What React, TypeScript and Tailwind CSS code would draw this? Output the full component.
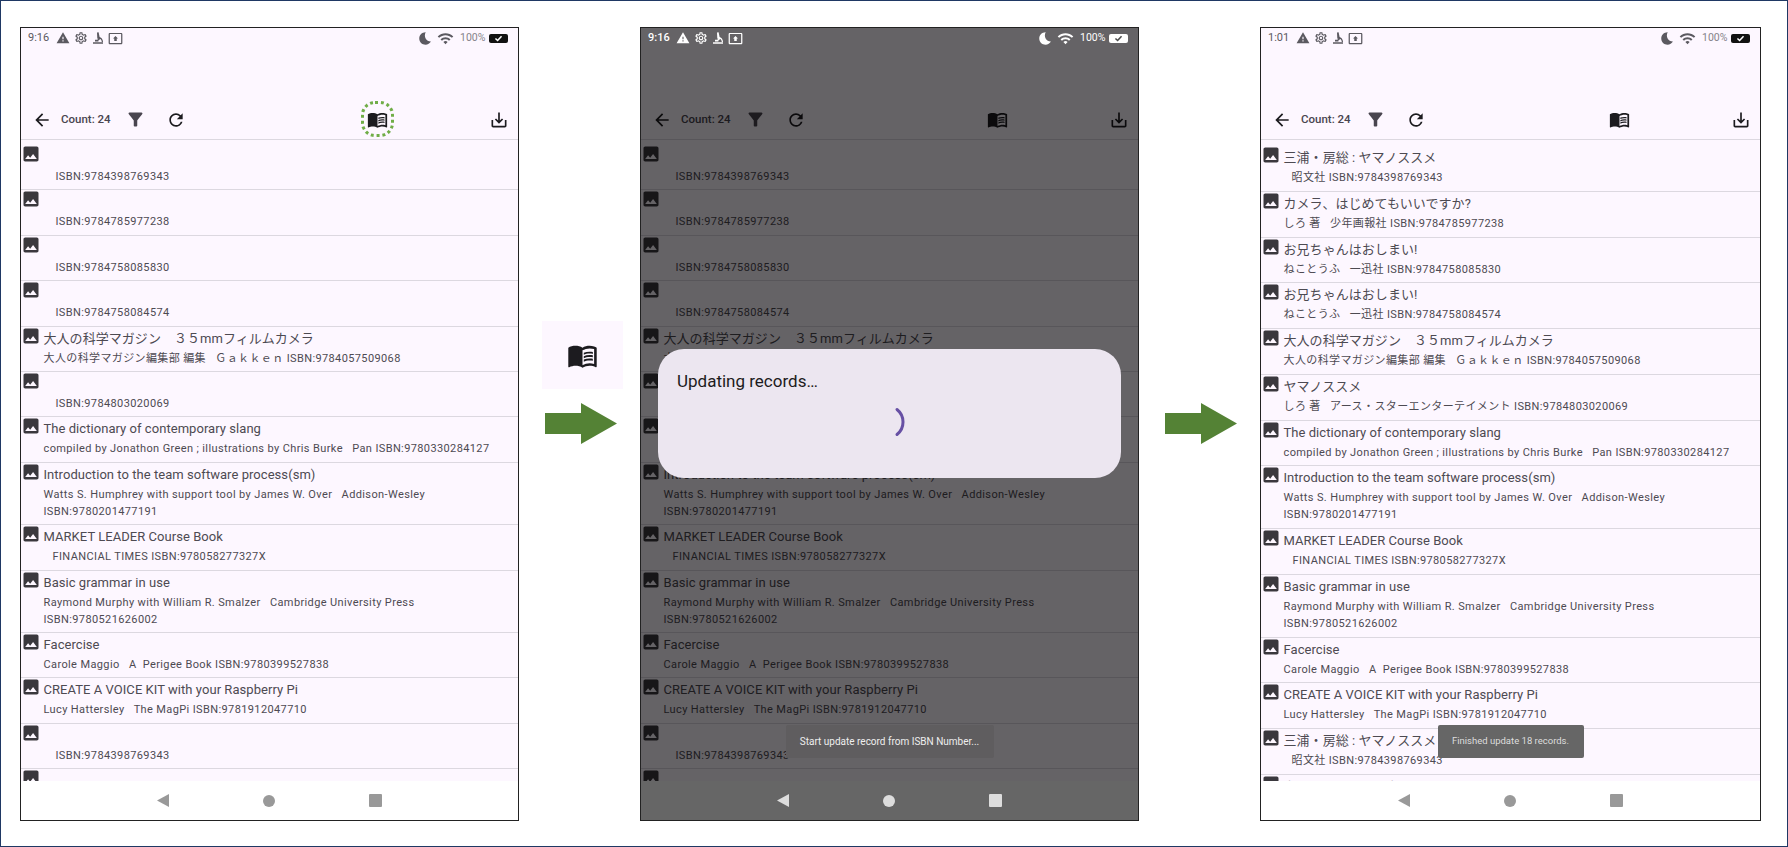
import { MdArrowBack, MdBedtime, MdFilterAlt, MdImage, MdMenuBook, MdOutlinePresentToAll, MdOutlineSettings, MdRefresh, MdSaveAlt, MdWarning, MdWifi } from 'react-icons/md'

type Book = {
  title?: string
  lines: string[]
  indent?: string
}

const isbnOnly = (isbn: string): Book => ({ lines: [`ISBN:${isbn}`], indent: 'pl-[12px]' })

// rows shared by both states
const commonRows: Book[] = [
  { title: '大人の科学マガジン　３５mmフィルムカメラ', lines: ['大人の科学マガジン編集部 編集   Ｇａｋｋｅｎ ISBN:9784057509068'] },
]

const restRows: Book[] = [
  { title: 'The dictionary of contemporary slang', lines: ['compiled by Jonathon Green ; illustrations by Chris Burke   Pan ISBN:9780330284127'] },
  { title: 'Introduction to the team software process(sm)', lines: ['Watts S. Humphrey with support tool by James W. Over   Addison-Wesley', 'ISBN:9780201477191'] },
  { title: 'MARKET LEADER Course Book', lines: ['FINANCIAL TIMES ISBN:978058277327X'], indent: 'pl-[9px]' },
  { title: 'Basic grammar in use', lines: ['Raymond Murphy with William R. Smalzer   Cambridge University Press', 'ISBN:9780521626002'] },
  { title: 'Facercise', lines: ['Carole Maggio   A  Perigee Book ISBN:9780399527838'] },
  { title: 'CREATE A VOICE KIT with your Raspberry Pi', lines: ['Lucy Hattersley   The MagPi ISBN:9781912047710'] },
]

const emptyRows: Book[] = [
  isbnOnly('9784398769343'),
  isbnOnly('9784785977238'),
  isbnOnly('9784758085830'),
  isbnOnly('9784758084574'),
  ...commonRows,
  isbnOnly('9784803020069'),
  ...restRows,
  isbnOnly('9784398769343'),
  { lines: [] },
]

const filledRows: Book[] = [
  { title: '三浦・房総 : ヤマノススメ', lines: ['昭文社 ISBN:9784398769343'], indent: 'pl-[8px]' },
  { title: 'カメラ、はじめてもいいですか?', lines: ['しろ 著   少年画報社 ISBN:9784785977238'] },
  { title: 'お兄ちゃんはおしまい!', lines: ['ねことうふ   一迅社 ISBN:9784758085830'] },
  { title: 'お兄ちゃんはおしまい!', lines: ['ねことうふ   一迅社 ISBN:9784758084574'] },
  ...commonRows,
  { title: 'ヤマノススメ', lines: ['しろ 著   アース・スターエンターテイメント ISBN:9784803020069'] },
  ...restRows,
  { title: '三浦・房総 : ヤマノススメ', lines: ['昭文社 ISBN:9784398769343'], indent: 'pl-[8px]' },
  { title: 'カメラ、はじめてもいいですか?', lines: [] },
]

function BookRow({ book, spacing }: { book: Book; spacing: string }) {
  return (
    <div className={`flex border-b border-[#dcd8e0] pl-[3px] ${spacing}`}>
      <MdImage size={20} className="-ml-[3.5px] -mt-[1px] shrink-0 self-start text-[#3a383d]" />
      <div className="ml-[3px] min-w-0">
        <p className="mt-[2px] h-[20px] text-[13px] leading-[20px] tracking-[0.05px] text-[#4d4a52] whitespace-pre">{book.title}</p>
        <div className={`mt-[2px] min-h-[16px] space-y-[1px] text-[11px] leading-[16px] tracking-[0.38px] text-[#4d4a52] whitespace-pre ${book.indent ?? ''}`}>
          {book.lines.map((line) => (
            <p key={line}>{line}</p>
          ))}
        </div>
      </div>
    </div>
  )
}

function MicroscopeIcon({ className }: { className: string }) {
  return (
    <svg viewBox="0 0 12 12" width="12" height="12" className={className} fill="currentColor">
      <path d="M5 0.5 6.6 0.2 7.6 5 9 5.8C10.3 6.8 11 8.5 11 10H9.8C9.7 8.8 9.2 7.7 8.3 7L6.4 8.4 5.4 7.8 6.3 6.6 5.3 6.8z" />
      <path d="M1 10.3h10V11.8H1zM3 7.8h3.4v1.6H3z" />
    </svg>
  )
}

function StatusBar({ time, dim }: { time: string; dim?: boolean }) {
  const tone = dim ? 'text-white' : 'text-[#5b5960]'
  return (
    <div className={`relative z-20 flex h-[20px] items-center pl-[7px] pr-[10px] text-[11px] ${tone}`}>
      <span className={`w-[27px] ${dim ? 'font-medium' : ''}`}>{time}</span>
      <MdWarning size={14} className="ml-[0.5px]" />
      <MdOutlineSettings size={14} className="ml-[4px]" />
      <MicroscopeIcon className="ml-[4px]" />
      <MdOutlinePresentToAll size={15} className="ml-[4px]" />
      <MdBedtime size={15} className="ml-auto" />
      <MdWifi size={17} className="ml-[4px]" />
      <span className={`ml-[6px] w-[27px] text-[10.5px] ${dim ? '' : 'text-[#85838a]'}`}>100%</span>
      <span className={`ml-[2px] flex h-[9px] w-[19px] items-center justify-center rounded-[2px] ${dim ? 'bg-white text-[#4a4a4a]' : 'bg-[#111] text-white'}`}>
        <svg viewBox="0 0 10 8" width="9" height="7" fill="none" stroke="currentColor" strokeWidth="1.8">
          <path d="M1.5 4 4 6.3 8.5 1.5" />
        </svg>
      </span>
    </div>
  )
}

function Toolbar({ ring }: { ring?: boolean }) {
  return (
    <div className="flex h-[40px] items-center border-b border-[#dcd8e0] pl-[11px] pr-[9.5px] text-[#1c1b1f]">
      <MdArrowBack size={20} className="shrink-0" />
      <span className="ml-[9px] w-[51px] text-[11.5px] font-medium whitespace-nowrap text-[#49454f]">Count: 24</span>
      <MdFilterAlt size={21} className="ml-[13px] text-[#49454f]" />
      <MdRefresh size={20} className="ml-[20px]" />
      <div className="relative ml-auto mr-[101px]">
        <MdMenuBook size={21} />
        {ring && <span className="absolute -left-[6px] -top-[8px] h-[36px] w-[33px] rounded-[14px] border-[3px] border-dotted border-[#70ad47]" />}
      </div>
      <MdSaveAlt size={20} />
    </div>
  )
}

function NavBar({ dim }: { dim?: boolean }) {
  const tone = dim ? 'bg-[#ddd]' : 'bg-[#999]'
  return (
    <div className="flex h-[39px] shrink-0 items-center justify-center gap-[94px] bg-white">
      <svg viewBox="0 0 12 13" width="12" height="13" className={`relative z-20 ${dim ? 'text-[#ddd]' : 'text-[#999]'}`} fill="currentColor">
        <path d="M12 0v13L0 6.5z" />
      </svg>
      <span className={`relative z-20 h-[12px] w-[12px] rounded-full ${tone}`} />
      <span className={`relative z-20 h-[13px] w-[13px] rounded-[1px] ${tone}`} />
    </div>
  )
}

function Toast({ text, className }: { text: string; className: string }) {
  return (
    <div className={`absolute bottom-[62px] left-1/2 z-30 flex h-[33px] -translate-x-1/2 items-center justify-center rounded-[2px] whitespace-nowrap ${className}`}>
      {text}
    </div>
  )
}

function Phone({ time, rows, width, listTop, spacing, ring, dim, children }: { time: string; rows: Book[]; width: string; listTop: string; spacing: string; ring?: boolean; dim?: boolean; children?: React.ReactNode }) {
  return (
    <div className={`relative flex h-[794px] shrink-0 flex-col overflow-hidden border border-[#222] bg-[#fdf7ff] ${width}`}>
      <StatusBar time={time} dim={dim} />
      <div className="h-[52px] shrink-0" />
      <Toolbar ring={ring} />
      <div className={`min-h-0 flex-1 overflow-hidden ${listTop}`}>
        {rows.map((book, i) => (
          <BookRow key={i} book={book} spacing={spacing} />
        ))}
      </div>
      <NavBar dim={dim} />
      {dim && <div className="absolute inset-0 z-10 bg-black/60" />}
      {children}
    </div>
  )
}

function Arrow() {
  return (
    <svg viewBox="0 0 72 41" width="72" height="41" className="ml-[2px] mt-[14px] text-[#548235]" fill="currentColor">
      <path d="M0 10H36V0L72 20.5 36 41V31H0z" />
    </svg>
  )
}

export default function App() {
  return (
    <div className="h-[847px] w-[1788px] overflow-hidden border border-[#1f3864] bg-white font-['Roboto','Noto_Sans_CJK_JP',sans-serif]">
      <div className="flex items-start pl-[19px] pt-[26px]">
        <Phone time="9:16" rows={emptyRows} width="w-[499px]" listTop="pt-[5px]" spacing="pb-[4.4px]" ring />

        <div className="flex w-[121px] shrink-0 flex-col items-center pt-[294px]">
          <div className="ml-[6px] flex h-[68px] w-[81px] items-center justify-center bg-[#fdf7ff] text-[#1c1b1f]">
            <MdMenuBook size={31} />
          </div>
          <Arrow />
        </div>

        <Phone time="9:16" rows={emptyRows} width="w-[499px]" listTop="pt-[5px]" spacing="pb-[4.4px]" dim>
          <div className="absolute left-[17px] right-[17px] top-[321px] z-30 h-[129px] rounded-[26px] bg-[#ece6f0] pl-[19px] pt-[20px]">
            <p className="text-[17px] leading-[24px] text-[#1d1b20]">Updating records…</p>
            <svg viewBox="0 0 40 40" width="40" height="40" className="mx-auto mt-[9px] -translate-x-[10px] text-[#6750a4]" fill="none" stroke="currentColor" strokeWidth="3" strokeLinecap="round">
              <path d="M28 7.5A16 16 0 0 1 28 32.5" />
            </svg>
          </div>
          <Toast text="Start update record from ISBN Number..." className="w-[208px] bg-[#5f5d5f] text-[10px] text-[#eee]" />
        </Phone>

        <div className="flex w-[121px] shrink-0 flex-col items-center pt-[294px]">
          <div className="h-[68px]" />
          <Arrow />
        </div>

        <Phone time="1:01" rows={filledRows} width="w-[501px]" listTop="pt-[6px]" spacing="pb-[4.75px]">
          <Toast text="Finished update 18 records." className="w-[146px] bg-[#666] text-[9.5px] text-[#ddd]" />
        </Phone>
      </div>
    </div>
  )
}
